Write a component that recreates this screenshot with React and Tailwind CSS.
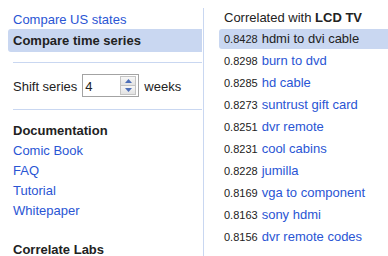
import React from "react";

const rows = [
  ["0.8428", "hdmi to dvi cable"],
  ["0.8298", "burn to dvd"],
  ["0.8285", "hd cable"],
  ["0.8273", "suntrust gift card"],
  ["0.8251", "dvr remote"],
  ["0.8231", "cool cabins"],
  ["0.8228", "jumilla"],
  ["0.8169", "vga to component"],
  ["0.8163", "sony hdmi"],
  ["0.8156", "dvr remote codes"],
];

export default function App() {
  return (
    <div
      className="w-[388px] h-[256px] overflow-hidden bg-white text-[13px] text-[#222]"
      style={{ fontFamily: '"Liberation Sans", Arial, sans-serif' }}
    >
      <div className="flex mt-[8px] h-[248px] overflow-hidden">
        {/* left column */}
        <div className="w-[204px] shrink-0 border-r border-[#c9d7f1]">
          <div className="pl-[13px] pt-[2px] leading-[19px] h-[21px] text-[#2a55d4]">
            Compare US states
          </div>
          <div className="ml-[8px] mr-[1px] pl-[5px] h-[23px] leading-[23px] bg-[#c9d7f1] rounded-l-[3px] font-bold text-[#222]">
            Compare time series
          </div>
          <div className="ml-[13px] mr-[1px] mt-[10px] h-px bg-[#c9d7f1]" />
          <div className="flex items-center pl-[13px] mt-[11px] h-[23px]">
            <span className="pt-[2px]">Shift series</span>
            <div className="ml-[5px] w-[57px] h-[23px] border border-[#a3a3a3] bg-white flex items-center justify-between">
              <span className="pl-[2px] pt-[1px] leading-[21px]">4</span>
              <div className="mr-[2px] w-[16px] h-[19px] flex flex-col border border-[#c4c4c4] bg-[#f0f0f0]">
                <div className="flex-1 flex items-center justify-center border-b border-[#c4c4c4] bg-gradient-to-b from-[#f7f7f7] to-[#e3e3e3]">
                  <svg width="7" height="4" viewBox="0 0 7 4">
                    <polygon points="3.5,0 7,4 0,4" fill="#4d6fb8" />
                  </svg>
                </div>
                <div className="flex-1 flex items-center justify-center bg-gradient-to-b from-[#f7f7f7] to-[#e3e3e3]">
                  <svg width="7" height="4" viewBox="0 0 7 4">
                    <polygon points="0,0 7,0 3.5,4" fill="#4d6fb8" />
                  </svg>
                </div>
              </div>
            </div>
            <span className="ml-[5px] pt-[2px]">weeks</span>
          </div>
          <div className="ml-[13px] mr-[1px] mt-[12px] h-px bg-[#c9d7f1]" />
          <div className="pl-[13px] mt-[11px] leading-[20px] font-bold">Documentation</div>
          <div className="pl-[13px] leading-[20px] text-[#2a55d4] flex flex-col">
            <span>Comic Book</span>
            <span>FAQ</span>
            <span>Tutorial</span>
            <span>Whitepaper</span>
          </div>
          <div className="pl-[13px] mt-[19px] leading-[20px] font-bold">Correlate Labs</div>
        </div>
        {/* right column */}
        <div className="flex-1 flex flex-col">
          <div className="pl-[20px] leading-[20px] h-[20px]">
            Correlated with <span className="font-bold">LCD TV</span>
          </div>
          <div className="flex flex-col ml-[15px]">
            {rows.map(([n, t], i) => (
              <div
                key={t}
                className={
                  "flex items-baseline pl-[5px] h-[20px] leading-[20px] my-[1px] " +
                  (i === 0 ? "bg-[#c9d7f1] rounded-l-[3px]" : "")
                }
              >
                <span className="text-[11px] text-[#222]">{n}</span>
                <span className={"ml-[4px] " + (i === 0 ? "text-[#222]" : "text-[#2a55d4]")}>{t}</span>
              </div>
            ))}
          </div>
        </div>
      </div>
    </div>
  );
}
